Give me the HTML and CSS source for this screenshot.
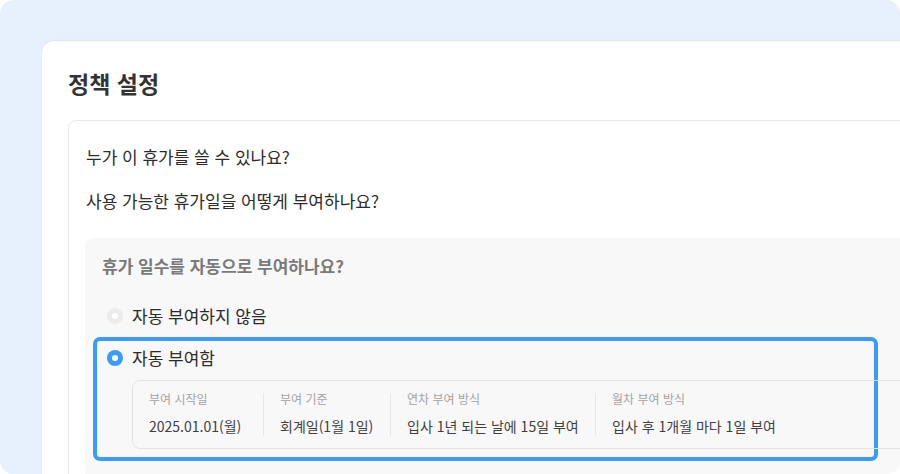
FILE: index.html
```html
<!DOCTYPE html>
<html lang="ko">
<head>
<meta charset="utf-8">
<title>정책 설정</title>
<link rel="stylesheet" href="styles.css">
</head>
<body>
<div class="frame">
  <section class="card">
    <h1 class="title">정책 설정</h1>
    <div class="panel">
      <p class="question">누가 이 휴가를 쓸 수 있나요?</p>
      <p class="question question-2">사용 가능한 휴가일을 어떻게 부여하나요?</p>
      <div class="grant">
        <h2 class="grant-title">휴가 일수를 자동으로 부여하나요?</h2>
        <div class="options">
          <div class="option">
            <div class="option-row">
              <span class="radio"></span>
              <span class="option-label">자동 부여하지 않음</span>
            </div>
          </div>
          <div class="option option-selected">
            <div class="option-row">
              <span class="radio radio-checked"></span>
              <span class="option-label">자동 부여함</span>
            </div>
            <div class="info">
              <div class="info-col col-1">
                <div class="info-label">부여 시작일</div>
                <div class="info-value">2025.01.01(월)</div>
              </div>
              <div class="info-col col-2">
                <div class="info-label">부여 기준</div>
                <div class="info-value">회계일(1월 1일)</div>
              </div>
              <div class="info-col col-3">
                <div class="info-label">연차 부여 방식</div>
                <div class="info-value">입사 1년 되는 날에 15일 부여</div>
              </div>
              <div class="info-col col-4">
                <div class="info-label">월차 부여 방식</div>
                <div class="info-value">입사 후 1개월 마다 1일 부여</div>
              </div>
            </div>
          </div>
        </div>
      </div>
    </div>
  </section>
</div>
</body>
</html>
```

FILE: styles.css
```css
* { box-sizing: border-box; }
html, body {
  margin: 0;
  padding: 0;
  background: #ffffff;
}
body {
  font-family: "Noto Sans CJK KR", "Noto Sans", sans-serif;
  color: #2b2b2b;
}
.frame {
  width: 900px;
  height: 474px;
  background: #e6f1fd;
  border-radius: 14px;
  overflow: hidden;
  padding: 41px 0 0 42px;
}
.card {
  width: 900px;
  height: 460px;
  background: #ffffff;
  border-radius: 12px 0 0 0;
  box-shadow: 0 -1px 2px rgba(0, 0, 0, 0.04);
  padding: 27px 0 0 26px;
}
.title {
  margin: 0;
  font-size: 23px;
  line-height: 30px;
  font-weight: 700;
  color: #333333;
}
.panel {
  margin-top: 22px;
  width: 900px;
  height: 400px;
  border: 1px solid #e9e9e9;
  border-radius: 8px 0 0 0;
  padding: 24px 0 0 16px;
}
.question {
  margin: 0 0 0 1px;
  font-size: 17px;
  line-height: 24px;
  color: #2b2b2b;
}
.question-2 {
  margin-top: 20px;
}
.grant {
  margin-top: 25px;
  width: 900px;
  height: 300px;
  background: #f8f8f8;
  border-radius: 8px 0 0 0;
  padding: 17px 0 0 17px;
}
.grant-title {
  margin: 0;
  font-size: 17px;
  line-height: 22px;
  font-weight: 700;
  color: #7a7a7a;
}
.options {
  margin: 18px 0 0 -9px;
  display: flex;
  flex-direction: column;
  gap: 0;
}
.option {
  width: 785px;
  border: 4px solid transparent;
  border-radius: 7px;
  padding: 7px 10px;
}
.option-selected {
  border-color: #3a9bfd;
  padding-bottom: 8px;
}
.option-row {
  display: flex;
  align-items: center;
  gap: 9px;
  height: 20px;
}
.radio {
  width: 16px;
  height: 16px;
  border-radius: 50%;
  background: #ebebeb;
  display: flex;
  align-items: center;
  justify-content: center;
  flex: none;
}
.radio::after {
  content: "";
  width: 6px;
  height: 6px;
  border-radius: 50%;
  background: #ffffff;
}
.radio-checked {
  background: #3a9bfd;
}
.option-label {
  font-size: 17px;
  line-height: 20px;
  color: #2b2b2b;
}
.info {
  margin: 12px 0 0 25px;
  width: 900px;
  border: 1px solid #e3e3e3;
  border-radius: 8px;
  padding: 12px 0;
  display: flex;
}
.info-col {
  padding: 0 0 0 16px;
  border-left: 1px solid #e6e6e6;
  display: flex;
  flex-direction: column;
}
.col-1 { width: 130px; border-left: none; }
.col-2 { width: 127px; }
.col-3 { width: 205px; }
.col-4 { flex: 1; }
.info-label {
  font-size: 12px;
  line-height: 12px;
  color: #a3a3a3;
}
.info-value {
  margin-top: 11px;
  font-size: 14px;
  line-height: 20px;
  color: #404040;
}
```
